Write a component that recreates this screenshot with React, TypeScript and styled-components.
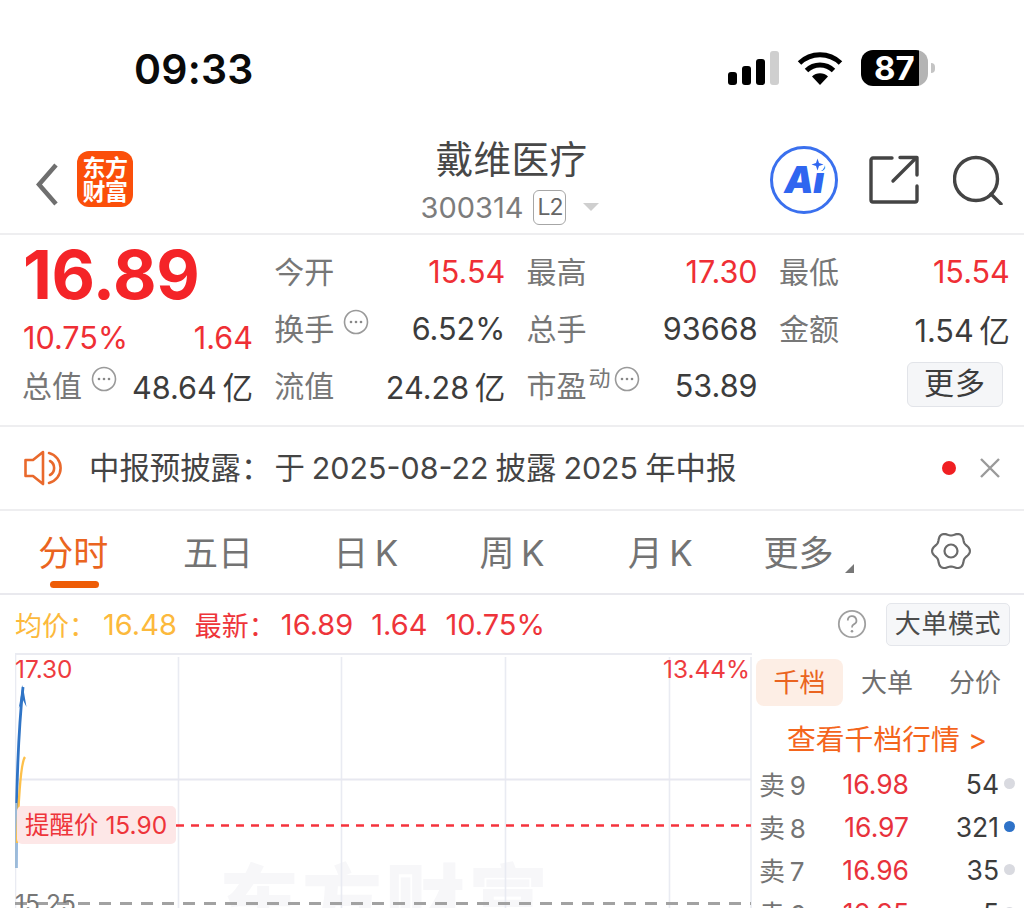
import React from "react";
import styled, { createGlobalStyle } from "styled-components";

const FONT = `Inter, "Noto Sans CJK SC", "Noto Sans", sans-serif`;
const RED = "#ef2f35";
const ORANGE = "#ea6420";

const Global = createGlobalStyle`
  html, body { margin: 0; padding: 0; background: #fff; }
  * { box-sizing: border-box; }
`;

const Page = styled.div`
  width: 1024px; height: 908px; overflow: hidden; background: #fff;
  font-family: ${FONT}; color: #444; position: relative;
`;

const StatusBar = styled.div`
  height: 135px; display: flex; align-items: flex-start; justify-content: space-between;
  padding: 44px 96px 0 134px;
`;
const Time = styled.div`font-size: 41px; line-height: 50px; font-weight: 600; color: #0a0a0a; letter-spacing: 0.2px;`;
const StatusIcons = styled.div`display: flex; align-items: center; margin-top: 6px;`;
const Battery = styled.div`
  position: relative; width: 67px; height: 36px; border-radius: 12px; margin-left: 18px;
  background: linear-gradient(90deg, #000 87%, #b4b4b4 87%);
  color: #fff; font-size: 33px; line-height: 36px; font-weight: 700; padding-left: 13px;
  &::after { content: ""; position: absolute; right: -7px; top: 13px; width: 4px; height: 10px; border-radius: 0 4px 4px 0; background: #c4c4c4; }
`;

const Header = styled.div`
  height: 100px; display: grid; grid-template-columns: 1fr auto 1fr; border-bottom: 2px solid #eeeef0;
`;
const HeaderLeft = styled.div`display: flex; align-items: flex-start; padding: 16px 0 0 36px; gap: 19px;`;
const Logo = styled.div`
  width: 56px; height: 56px; border-radius: 12px; background: #fb4f0a; color: #fff;
  font-size: 23px; line-height: 24px; font-weight: 700; text-align: center; padding-top: 5px; letter-spacing: -0.5px;
`;
const TitleBlock = styled.div`display: flex; flex-direction: column; align-items: center; padding-top: 1px;`;
const Title = styled.div`font-size: 37.5px; line-height: 48px; color: #484848; letter-spacing: 0.4px; margin-left: -1px;`;
const CodeRow = styled.div`display: flex; align-items: center; margin: 4px 0 0 -4px; height: 38px;`;
const Code = styled.span`font-size: 29px; color: #7c7c7c;`;
const Level = styled.span`
  width: 33px; height: 35px; margin-left: 10px; border: 1.5px solid #a6a6a6; border-radius: 6px;
  font-size: 23px; line-height: 32px; color: #666; text-align: center; letter-spacing: -1px;
`;
const Caret = styled.span`
  width: 0; height: 0; margin-left: 17px; border-left: 8px solid transparent; border-right: 8px solid transparent; border-top: 8px solid #cfcfcf;
`;
const HeaderRight = styled.div`display: flex; justify-content: flex-end; align-items: flex-start; padding: 11px 21px 0 0; gap: 31px;`;
const AiBadge = styled.div`
  position: relative; width: 68px; height: 68px; border-radius: 50%; border: 3px solid #3a70ee; color: #2f66f0;
  font-size: 37px; font-weight: 900; font-style: italic; line-height: 62px; text-align: center; letter-spacing: -0.5px;
`;
const AiSpark = styled.svg`position: absolute; right: 10px; top: 8px;`;
const IconGroup = styled.svg`margin-top: 9px; display: block;`;

const Stats = styled.div`
  height: 192px; padding: 7px 14px 0 23px; border-bottom: 2px solid #eeeef0;
  display: grid; grid-template-columns: repeat(4, 230px); grid-auto-rows: 57px; column-gap: 22.3px;
`;
const Cell = styled.div`display: flex; align-items: center; justify-content: space-between; white-space: nowrap;`;
const ChangeCell = styled(Cell)`padding-top: 17px;`;
const Price = styled.div`font-size: 67px; font-weight: 700; color: #f42428; line-height: 57px; letter-spacing: -0.3px; margin-top: 8px;`;
const LabelWrap = styled.span`display: inline-flex; align-items: center;`;
const Label = styled.span`font-size: 30px; color: #777; letter-spacing: 0; margin: 0 0 2px -1px;`;
const Sup = styled.span`font-size: 22px; color: #777; margin: 0 3px 18px 2px;`;
const Value = styled.span<{ $red?: boolean }>`
  font-size: 30.6px; color: ${(p) => (p.$red ? RED : "#3c3c3c")}; margin-top: 2px;
`;
const InfoDots = styled.svg<{ $gap: number }>`margin: 0 0 12px ${(p) => p.$gap}px; display: block;`;
const MoreButton = styled.div`
  width: 96px; height: 45px; margin: -1px 7px 0 auto; border: 1.5px solid #e2e4e9; border-radius: 6px; background: #f5f6f8;
  font-size: 30px; line-height: 41px; color: #3c3c3c; text-align: center; letter-spacing: 1px;
`;

const Notice = styled.div`
  height: 84px; display: flex; align-items: center; padding: 0 24px; border-bottom: 2px solid #eeeef0;
`;
const NoticeText = styled.div`
  font-size: 30.4px; color: #444; margin: -5px 0 0 25px; flex: 1; white-space: pre; word-spacing: -1.5px; text-spacing-trim: space-all;
`;
const NoticeColon = styled.span`margin-right: 3px;`;
const RedDot = styled.span`width: 14px; height: 14px; border-radius: 50%; background: #f01f22; margin-right: 24px;`;

const Tabs = styled.div`
  height: 84px; display: grid; grid-template-columns: repeat(7, 1fr); align-items: center; border-bottom: 2px solid #e9e9ee;
`;
const Tab = styled.div<{ $active?: boolean; $shift?: number }>`
  position: relative; justify-self: center; font-size: 35px; line-height: 44px; margin-top: 2px; white-space: pre;
  margin-right: ${(p) => p.$shift ?? 0}px;
  color: ${(p) => (p.$active ? ORANGE : "#737373")};
  ${(p) => p.$active && `&::after { content: ""; position: absolute; left: 12px; right: 9px; bottom: -13px; height: 7px; border-radius: 4px; background: #ee5c06; }`}
`;
const TinyCorner = styled.span`
  position: absolute; right: -20px; bottom: 2px; width: 0; height: 0;
  border-left: 9px solid transparent; border-bottom: 9px solid #777;
`;

const InfoRow = styled.div`
  height: 58px; display: flex; align-items: center; padding: 0 14px 0 15px; font-size: 27px;
`;
const Quote = styled.span<{ $tone: "gold" | "red"; $gap: number; $num?: boolean }>`
  color: ${(p) => (p.$tone === "gold" ? "#fcb93c" : "#ee343a")}; margin-left: ${(p) => p.$gap}px; white-space: pre;
  font-size: ${(p) => (p.$num ? "29px" : "27px")}; text-spacing-trim: space-all;
`;
const Spacer = styled.div`flex: 1;`;
const Outline = styled.div`
  width: 124px; height: 43px; margin-left: 19px; border: 1.5px solid #e4e6eb; border-radius: 5px; background: #f6f7f9;
  font-size: 26px; line-height: 39px; color: #4c4c4c; text-align: center; letter-spacing: 0.6px;
`;

const Lower = styled.div`display: flex; align-items: flex-start; padding-left: 15px;`;
const Chart = styled.div`position: relative; width: 737px; height: 260px; flex: none;`;
const ChartSvg = styled.svg`position: absolute; left: 0; top: 0; display: block;`;
const Watermark = styled.div`
  position: absolute; left: 204px; top: 204px; font-size: 80px; font-weight: 900; line-height: 90px; color: #f7f7f9; letter-spacing: 3px; white-space: nowrap;
`;
const AxisLabel = styled.span<{ $left?: number; $right?: number; $top: number; $gray?: boolean }>`
  position: absolute; top: ${(p) => p.$top}px; font-size: 24.4px; line-height: 28px;
  ${(p) => (p.$left !== undefined ? `left: ${p.$left}px;` : "")}
  ${(p) => (p.$right !== undefined ? `right: ${p.$right}px;` : "")}
  color: ${(p) => (p.$gray ? "#777" : "#ee3b40")};
`;
const ReminderTag = styled.div`
  position: absolute; left: 2px; top: 153px; width: 159px; height: 38px; border-radius: 5px; background: #fde7e7;
  color: #ee343a; font-size: 24.5px; line-height: 38px; padding-left: 8px; white-space: pre;
`;

const Side = styled.div`flex: 1; padding-top: 6px;`;
const SideTabs = styled.div`display: flex; padding-left: 4px; height: 47px;`;
const SideTab = styled.div<{ $active?: boolean; $width: number }>`
  width: ${(p) => p.$width}px; height: 47px; border-radius: 8px; text-align: center; font-size: 26px; line-height: 47px;
  background: ${(p) => (p.$active ? "#fdeee5" : "transparent")}; color: ${(p) => (p.$active ? ORANGE : "#6f6f6f")};
`;
const DepthLink = styled.div`
  margin-top: 12px; padding-left: 35px; font-size: 28.8px; line-height: 44px; color: #f4651c; white-space: pre;
`;
const DepthRow = styled.div`
  display: grid; grid-template-columns: 70px 80px 90px 16px; height: 43px; align-items: center; padding-left: 7px; font-size: 26.5px;
`;
const DepthLabel = styled.span`color: #747474; white-space: pre; font-size: 26px;`;
const DepthPrice = styled.span`color: #e8323c; text-align: right;`;
const DepthQty = styled.span`color: #3c3c3c; text-align: right;`;
const Dot = styled.span<{ $blue?: boolean }>`
  justify-self: end; width: 11px; height: 11px; border-radius: 50%; background: ${(p) => (p.$blue ? "#2e72c8" : "#d9dae0")};
`;

const InfoIcon = ({ gap }: { gap: number }) => (
  <InfoDots $gap={gap} width="26" height="26" viewBox="0 0 26 26">
    <circle cx="13" cy="13" r="11.5" fill="none" stroke="#9a9a9a" strokeWidth="1.6" />
    <circle cx="8" cy="13" r="1.3" fill="#888" />
    <circle cx="13" cy="13" r="1.3" fill="#888" />
    <circle cx="18" cy="13" r="1.3" fill="#888" />
  </InfoDots>
);

const gearPath = (() => {
  const pts: string[] = [];
  for (let i = 0; i < 120; i++) {
    const t = (i / 120) * Math.PI * 2;
    const r = 17.2 + 1.7 * Math.cos(6 * t);
    pts.push(`${(20 + r * Math.cos(t)).toFixed(2)} ${(20 + r * Math.sin(t)).toFixed(2)}`);
  }
  return `M${pts.join("L")}Z`;
})();

const THIN = "\u2009";
const depth = [
  { n: `卖${THIN}9`, p: "16.98", q: "54", blue: false },
  { n: `卖${THIN}8`, p: "16.97", q: "321", blue: true },
  { n: `卖${THIN}7`, p: "16.96", q: "35", blue: false },
  { n: `卖${THIN}6`, p: "16.95", q: "5", blue: false },
];

export default function App() {
  return (
    <Page>
      <Global />
      <StatusBar>
        <Time>09:33</Time>
        <StatusIcons>
          <svg width="51" height="34" viewBox="0 0 51 34">
            <rect x="0" y="21" width="9" height="13" rx="3" fill="#000" />
            <rect x="14" y="15" width="9" height="19" rx="3" fill="#000" />
            <rect x="28" y="8" width="9" height="26" rx="3" fill="#000" />
            <rect x="42" y="0" width="9" height="34" rx="3" fill="#cfcfcf" />
          </svg>
          <svg width="46" height="34" viewBox="0 0 46 34" style={{ marginLeft: 18 }}>
            <path d="M23 34 L15 25.5 A11.5 11.5 0 0 1 31 25.5 Z" fill="#000" />
            <path d="M9.5 19.5 A19.5 19.5 0 0 1 36.5 19.5" fill="none" stroke="#000" strokeWidth="5" />
            <path d="M2.5 12 A29.5 29.5 0 0 1 43.5 12" fill="none" stroke="#000" strokeWidth="5" />
          </svg>
          <Battery>87</Battery>
        </StatusIcons>
      </StatusBar>

      <Header>
        <HeaderLeft>
          <svg width="22" height="60" viewBox="0 0 22 60" style={{ marginTop: 4 }}>
            <path d="M20 10 L3 29.5 L20 49" fill="none" stroke="#6f6f6f" strokeWidth="4.5" />
          </svg>
          <Logo>东方<br />财富</Logo>
        </HeaderLeft>
        <TitleBlock>
          <Title>戴维医疗</Title>
          <CodeRow>
            <Code>300314</Code>
            <Level>L2</Level>
            <Caret />
          </CodeRow>
        </TitleBlock>
        <HeaderRight>
          <AiBadge>
            Ai
            <AiSpark width="15" height="15" viewBox="0 0 15 15">
              <circle cx="7.5" cy="7.5" r="7.5" fill="#fff" />
              <path d="M7.5 1.5 L9 6 L13.5 7.5 L9 9 L7.5 13.5 L6 9 L1.5 7.5 L6 6 Z" fill="#2f66f0" />
            </AiSpark>
          </AiBadge>
          <IconGroup width="50" height="50" viewBox="0 0 50 50" fill="none" stroke="#444" strokeWidth="3.4" strokeLinecap="round" strokeLinejoin="round">
            <path d="M23 3 H4 a2 2 0 0 0 -2 2 V45 a2 2 0 0 0 2 2 H46 a2 2 0 0 0 2 -2 V31" />
            <path d="M24 26 L47 3" />
            <path d="M31 2.5 H48 V20" />
          </IconGroup>
          <IconGroup width="50" height="50" viewBox="0 0 50 50" fill="none" stroke="#444" strokeWidth="3.4" strokeLinecap="round" style={{ marginLeft: 3 }}>
            <circle cx="23" cy="24" r="21.5" />
            <path d="M38 39 L48 49" />
          </IconGroup>
        </HeaderRight>
      </Header>

      <Stats>
        <Cell><Price>16.89</Price></Cell>
        <Cell><Label>今开</Label><Value $red>15.54</Value></Cell>
        <Cell><Label>最高</Label><Value $red>17.30</Value></Cell>
        <Cell><Label>最低</Label><Value $red>15.54</Value></Cell>

        <ChangeCell><Value $red>10.75%</Value><Value $red>1.64</Value></ChangeCell>
        <Cell><LabelWrap><Label>换手</Label><InfoIcon gap={9} /></LabelWrap><Value>6.52%</Value></Cell>
        <Cell><Label>总手</Label><Value>93668</Value></Cell>
        <Cell><Label>金额</Label><Value>1.54{THIN}亿</Value></Cell>

        <Cell><LabelWrap><Label>总值</Label><InfoIcon gap={9} /></LabelWrap><Value>48.64{THIN}亿</Value></Cell>
        <Cell><Label>流值</Label><Value>24.28{THIN}亿</Value></Cell>
        <Cell><LabelWrap><Label>市盈</Label><Sup>动</Sup><InfoIcon gap={0} /></LabelWrap><Value>53.89</Value></Cell>
        <Cell><MoreButton>更多</MoreButton></Cell>
      </Stats>

      <Notice>
        <svg width="40" height="36" viewBox="0 0 40 36" fill="none" stroke="#e9692c" strokeWidth="2.6" strokeLinejoin="round" strokeLinecap="round">
          <path d="M19 2 L9 10 H1.5 V26 H9 L19 34 Z" />
          <path d="M26 11 A8 8 0 0 1 26 25" />
          <path d="M25 3 A15.5 15.5 0 0 1 25 33" />
        </svg>
        <NoticeText>中报预披露<NoticeColon>：</NoticeColon>于 2025-08-22 披露 2025 年中报</NoticeText>
        <RedDot />
        <svg width="20" height="20" viewBox="0 0 20 20">
          <path d="M1 1 L19 19 M19 1 L1 19" stroke="#9a9a9a" strokeWidth="2.4" />
        </svg>
      </Notice>

      <Tabs>
        <Tab $active>分时</Tab>
        <Tab $shift={3}>五日</Tab>
        <Tab>日{THIN}K</Tab>
        <Tab>周{THIN}K</Tab>
        <Tab $shift={-4}>月{THIN}K</Tab>
        <Tab $shift={12}>更多<TinyCorner /></Tab>
        <svg width="40" height="40" viewBox="0 0 40 40" fill="none" stroke="#6a6a6a" strokeWidth="2.2" style={{ justifySelf: "center", marginTop: -2 }}>
          <path d={gearPath} />
          <circle cx="20" cy="20" r="6.5" />
        </svg>
      </Tabs>

      <InfoRow>
        <Quote $tone="gold" $gap={0}>均价：</Quote>
        <Quote $tone="gold" $gap={7} $num>16.48</Quote>
        <Quote $tone="red" $gap={18}>最新：</Quote>
        <Quote $tone="red" $gap={5} $num>16.89</Quote>
        <Quote $tone="red" $gap={18} $num>1.64</Quote>
        <Quote $tone="red" $gap={18} $num>10.75%</Quote>
        <Spacer />
        <svg width="30" height="30" viewBox="0 0 30 30">
          <circle cx="15" cy="15" r="13.2" fill="none" stroke="#a0a0a0" strokeWidth="1.8" />
          <path d="M10.8 11.5 A4.3 4.3 0 1 1 16.8 15.4 C15.4 16 15 17 15 18.6" fill="none" stroke="#999" strokeWidth="1.8" />
          <circle cx="15" cy="22.2" r="1.3" fill="#999" />
        </svg>
        <Outline>大单模式</Outline>
      </InfoRow>

      <Lower>
        <Chart>
          <Watermark>东方财富</Watermark>
          <ChartSvg width="737" height="260" viewBox="0 0 737 260" fill="none">
            <path d="M0 1 H995" stroke="#eaebf1" strokeWidth="2" />
            <path d="M0.5 0 V260 M163.5 4 V260 M326.5 4 V260 M490.5 4 V260 M654.5 4 V260 M736 4 V260" stroke="#e9ebf2" strokeWidth="1.6" />
            <path d="M0 126.5 H736" stroke="#e7e8f0" strokeWidth="2" />
            <path d="M1 215 C1 170 2 90 8 34" stroke="#2f74c6" strokeWidth="2.8" />
            <path d="M1 215 V150" stroke="#9dbbd8" strokeWidth="2.4" />
            <path d="M7.7 32 L3.8 55 L8 47 L11.5 54 Z" fill="#2f74c6" />
            <path d="M2 190 C3 160 5 110 10 104" stroke="#fdc04a" strokeWidth="2.4" />
            <path d="M161 172.5 H736" stroke="#f5333c" strokeWidth="2.6" strokeDasharray="8 7" />
            <path d="M0 250.5 H736" stroke="#a2a2a2" strokeWidth="2.8" strokeDasharray="12 9" />
          </ChartSvg>
          <AxisLabel $left={0} $top={2}>17.30</AxisLabel>
          <AxisLabel $right={2} $top={2}>13.44%</AxisLabel>
          <ReminderTag>提醒价 15.90</ReminderTag>
          <AxisLabel $left={0} $top={236} $gray>15.25</AxisLabel>
        </Chart>
        <Side>
          <SideTabs>
            <SideTab $active $width={87}>千档</SideTab>
            <SideTab $width={88}>大单</SideTab>
            <SideTab $width={88}>分价</SideTab>
          </SideTabs>
          <DepthLink>查看千档行情 &gt;</DepthLink>
          {depth.map((d) => (
            <DepthRow key={d.n}>
              <DepthLabel>{d.n}</DepthLabel>
              <DepthPrice>{d.p}</DepthPrice>
              <DepthQty>{d.q}</DepthQty>
              <Dot $blue={d.blue} />
            </DepthRow>
          ))}
        </Side>
      </Lower>
    </Page>
  );
}
